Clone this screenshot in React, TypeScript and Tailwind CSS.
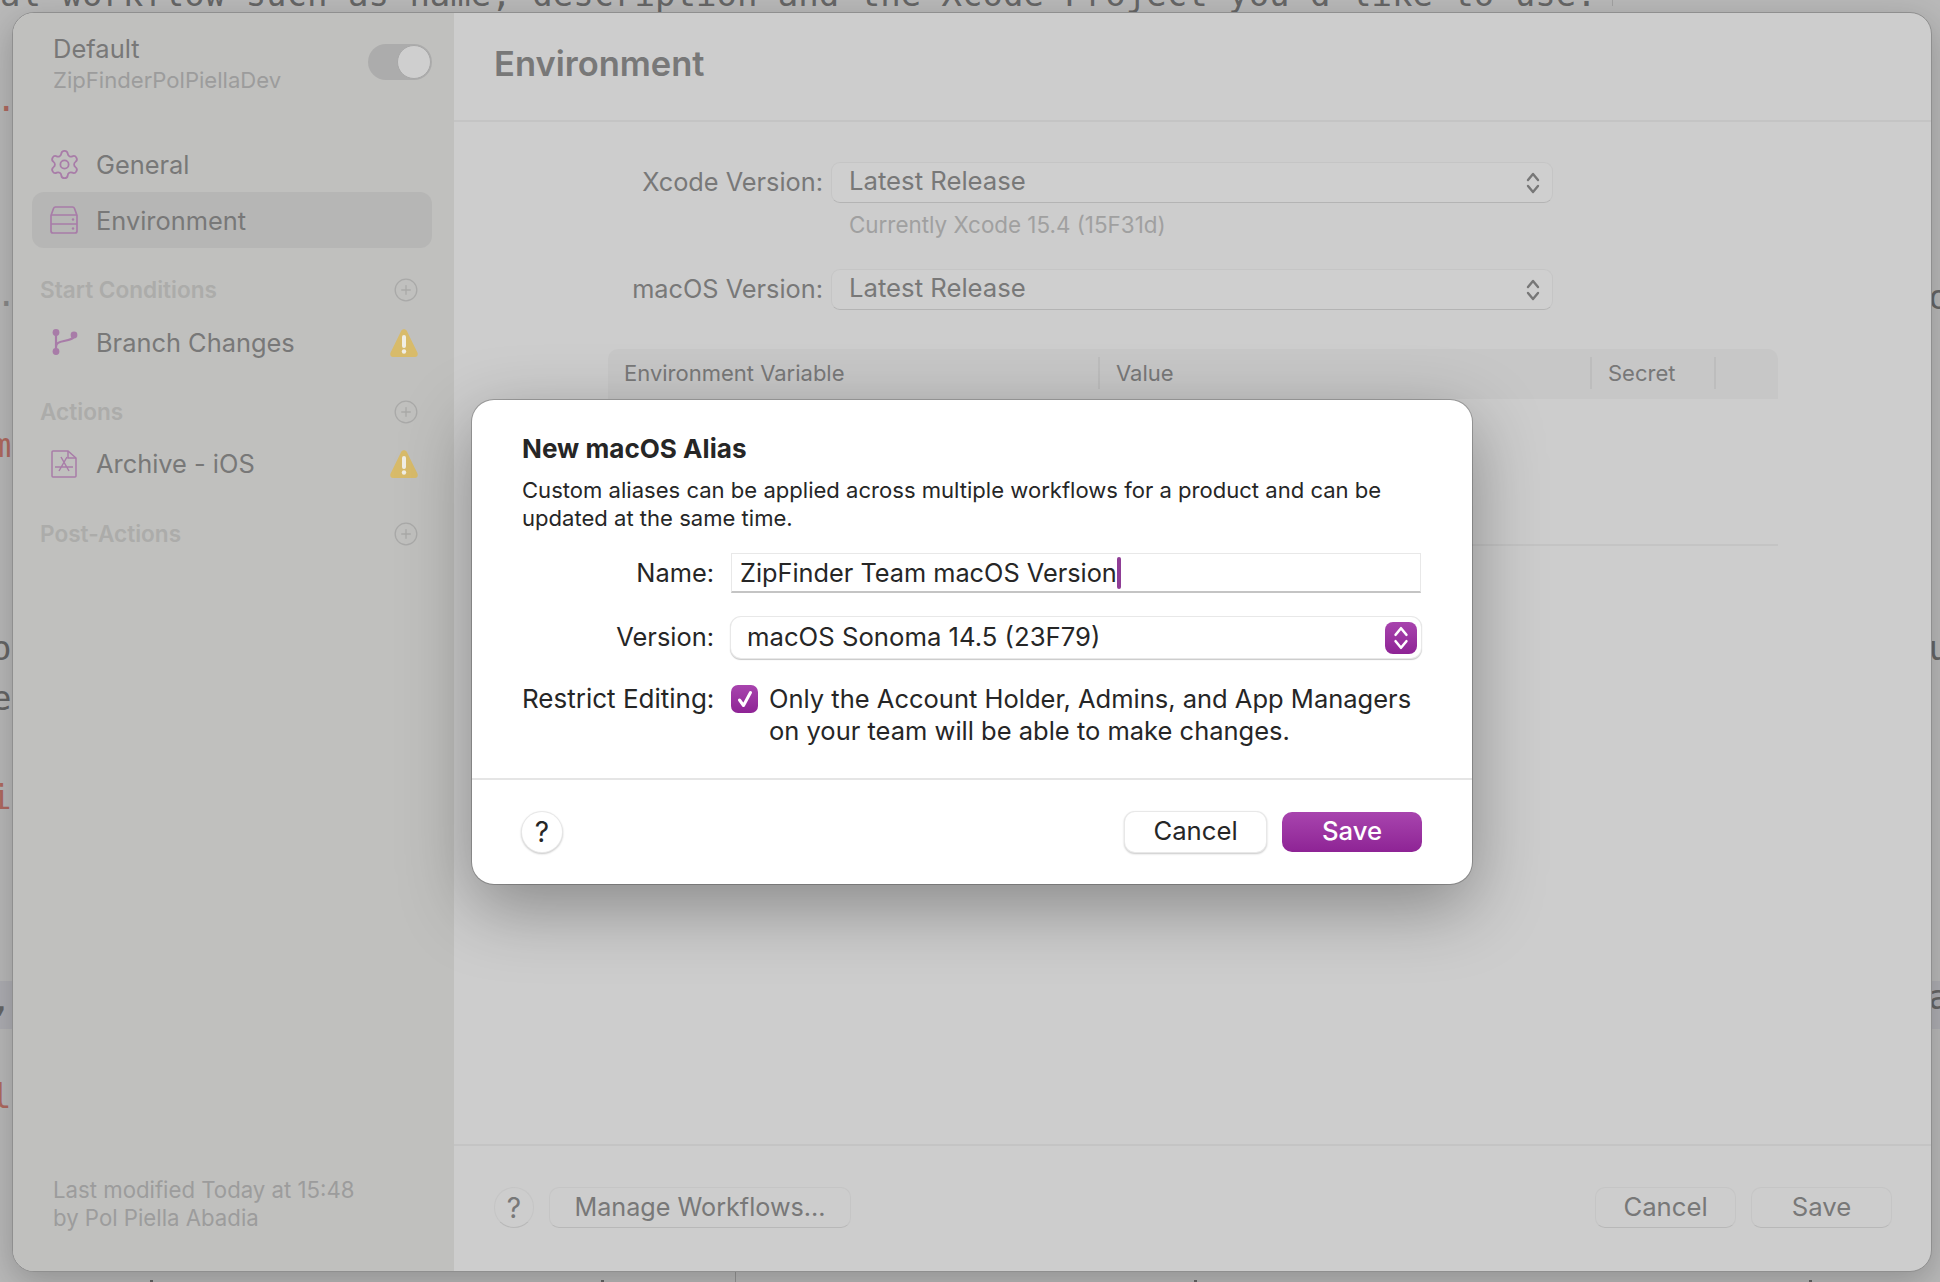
import { CirclePlus, Settings } from 'lucide-react';

function ServerIcon() {
  return (
    <svg viewBox="0 0 28 28" className="w-[28px] h-[28px]" fill="none" stroke="#a87ca8" strokeWidth="1.7">
      <path d="M1 9.5 3.5 2.5A2.5 2.5 0 0 1 5.5 1h17a2.5 2.5 0 0 1 2 1.5L27 9.5V25a2 2 0 0 1-2 2H3a2 2 0 0 1-2-2Z" />
      <path d="M1 9h26M1 18h26" />
      <circle cx="23" cy="13.5" r="1.2" fill="#a87ca8" stroke="none" />
      <circle cx="23" cy="22.5" r="1.2" fill="#a87ca8" stroke="none" />
    </svg>
  );
}

function BranchIcon() {
  return (
    <svg viewBox="0 0 28 28" className="w-[28px] h-[28px]" fill="none" stroke="#a87ca8" strokeWidth="2.2">
      <circle cx="6" cy="3.5" r="3.4" fill="#a87ca8" stroke="none" />
      <circle cx="6" cy="22.5" r="3.4" fill="#a87ca8" stroke="none" />
      <circle cx="24" cy="6" r="3.4" fill="#a87ca8" stroke="none" />
      <path d="M6 4v18M6 18c0-4 3-5 8-6 6-1 10-2 10-6" />
    </svg>
  );
}

function ArchiveIcon() {
  return (
    <svg viewBox="0 0 28 28" className="w-[28px] h-[28px]" fill="none" stroke="#a87ca8" strokeWidth="1.5">
      <path d="M3 1h15l8 7v18a1 1 0 0 1-1 1H3a1 1 0 0 1-1-1V2a1 1 0 0 1 1-1Z" />
      <path d="M18 1v7h8" />
      <path d="M11 7l8 14M17 7 9 21M5 17h18" />
    </svg>
  );
}

function WarningIcon() {
  return (
    <svg viewBox="0 0 28 28" className="w-[28px] h-[28px]">
      <path d="M11 2.200C12.300-.4 15.700-.4 17 2.200L27.400 23.400C28.400 25.400 27.200 28 25 28H3C.8 28-.4 25.400.6 23.400Z" fill="#d8bb6a" />
      <path d="M14 8v9" stroke="#f0eee5" strokeWidth="4" strokeLinecap="round" />
      <circle cx="14" cy="22.500" r="2.200" fill="#f0eee5" />
    </svg>
  );
}

function Chevrons({ color, className }: { color: string; className: string }) {
  return (
    <svg viewBox="0 0 16 24" className={className} fill="none" stroke={color} strokeWidth="2.400" strokeLinecap="round" strokeLinejoin="round">
      <path d="M3 9l5-6 5 6M3 15l5 6 5-6" />
    </svg>
  );
}

function NavRow({ icon, label, active }: { icon: React.ReactNode; label: string; active?: boolean }) {
  return (
    <div className={active ? 'flex items-center h-[56px] ml-[19px] mr-[22px] pl-[18px] rounded-[12px] bg-[#b6b6b5]' : 'flex items-center h-[56px] ml-[19px] mr-[22px] pl-[18px]'}>
      <div className="w-[28px] h-[28px]">{icon}</div>
      <span className="ml-[18px] pt-[2px] text-[25.400px] text-[#787878]">{label}</span>
    </div>
  );
}

function SectionHeader({ label, className }: { label: string; className: string }) {
  return (
    <div className={`flex items-center justify-between h-[40px] ml-[27px] mr-[36px] ${className}`}>
      <span className="text-[22.600px] font-semibold text-[#acacaa]">{label}</span>
      <CirclePlus className="w-[26px] h-[26px] -mr-[1px] text-[#a9a9a8]" strokeWidth={1.200} />
    </div>
  );
}

function IssueRow({ icon, label, className }: { icon: React.ReactNode; label: string; className: string }) {
  return (
    <div className={`flex items-center h-[56px] ml-[37px] mr-[36px] ${className}`}>
      <div className="w-[28px] h-[28px]">{icon}</div>
      <span className="ml-[18px] pt-[1px] text-[25.400px] text-[#787878]">{label}</span>
      <div className="ml-auto">
        <WarningIcon />
      </div>
    </div>
  );
}

function Popup({ label }: { label: string }) {
  return (
    <div className="flex items-center">
      <div className="w-[369px] pl-[1px] pb-[2px] text-right text-[25.300px] text-[#787878]">{label}</div>
      <div className="flex items-center justify-between w-[722px] h-[41px] ml-[8px] pl-[17px] pr-[11px] rounded-[9px] border border-[#c5c5c5] border-b-[#b4b4b4] bg-[#cfcfcf] text-[25.700px] text-[#787878]">
        <span className="pb-[2px]">Latest Release</span>
        <Chevrons color="#777777" className="w-[16px] h-[24px]" />
      </div>
    </div>
  );
}

function GhostButton({ label, className }: { label: string; className: string }) {
  return (
    <div className={`flex items-center justify-center h-[41px] rounded-[10px] border border-[#c5c5c5] border-b-[#b8b8b8] bg-[#cdcdcd] text-[#787878] ${className}`}>
      {label}
    </div>
  );
}

export default function App() {
  return (
    <div className="relative w-[1940px] h-[1282px] overflow-hidden bg-[#b9b9b9] font-['Inter',sans-serif]">
      {/* dimmed editor text behind the window */}
      <div className="absolute inset-0 font-['DejaVu_Sans_Mono',monospace] text-[34px] leading-[48px] text-[#666666]">
        <div className="-mt-[30px] whitespace-pre">{'al workflow such as name, description and the Xcode Project you\'d like to use.'}</div>
        <div className="flex justify-between h-[81px] mt-[63px] text-[#b06a60]"><span className="-ml-[4px] -mt-[6px]">.</span></div>
        <div className="flex justify-between h-[48px] mt-[111px]"><span className="-ml-[4px] -mt-[3px] text-[#8a8a8a]">.</span><span className="-mr-[9px]">o</span></div>
        <div className="flex justify-between h-[48px] mt-[100px] text-[#b06a60]"><span className="-ml-[9px]">m</span></div>
        <div className="flex justify-between h-[48px] mt-[155px]"><span className="-ml-[9px]">o</span><span className="-mr-[9px]">u</span></div>
        <div className="flex justify-between h-[48px] mt-[2px]"><span className="-ml-[9px]">e</span></div>
        <div className="flex justify-between h-[48px] mt-[51px] text-[#b06a60]"><span className="-ml-[9px]">i</span></div>
        <div className="flex justify-between h-[48px] mt-[160px] bg-[#aeaeb3]"><span className="-ml-[9px] -mt-[6px]">,</span><span className="-mr-[9px] -mt-[8px]">a</span></div>
        <div className="flex justify-between h-[48px] mt-[43px] text-[#b06a60]"><span className="-ml-[9px]">l</span></div>
        <span className="absolute left-[1612px] top-0 w-[1px] h-[6px] bg-[#a2a2a2]" />
        <span className="absolute left-[735px] bottom-0 w-[1px] h-[10px] bg-[#959595]" />
        <span className="absolute left-[150px] bottom-0 w-[3px] h-[2px] bg-[#666666]" />
        <span className="absolute left-[601px] bottom-0 w-[3px] h-[2px] bg-[#666666]" />
        <span className="absolute left-[1194px] bottom-0 w-[3px] h-[2px] bg-[#666666]" />
        <span className="absolute left-[1809px] bottom-0 w-[3px] h-[2px] bg-[#666666]" />
      </div>

      {/* window */}
      <div className="relative h-full pt-[12px] pl-[12px] pr-[8px] pb-[10px]">
        <div className="flex h-full overflow-hidden rounded-[22px] border border-[#8f8f8f] bg-[#cdcdcd] shadow-[0_10px_34px_rgba(0,0,0,0.22)]">
          <aside className="flex flex-col w-[441px] shrink-0 pt-[17px] bg-[#c0c0be]">
            <div className="flex items-center justify-between pl-[40px] pr-[22px]">
              <div>
                <div className="h-[36px] pt-[1px] leading-[36px] text-[25.500px] text-[#787878]">Default</div>
                <div className="h-[28px] leading-[28px] text-[22.100px] text-[#9c9c9c]">ZipFinderPolPiellaDev</div>
              </div>
              <div className="flex items-center justify-end w-[64px] h-[36px] p-[1px] rounded-full bg-[#acacac]">
                <div className="w-[34px] h-[34px] rounded-full border border-[#a8a8a8] bg-[#cfcfcf]" />
              </div>
            </div>

            <div className="mt-[42px]">
              <NavRow icon={<Settings className="w-[33px] h-[33px] -m-[2.500px] text-[#a87ca8]" strokeWidth={1.300} />} label="General" />
              <NavRow icon={<ServerIcon />} label="Environment" active />
            </div>

            <SectionHeader label="Start Conditions" className="mt-[22px]" />
            <IssueRow icon={<BranchIcon />} label="Branch Changes" className="mt-[5px]" />
            <SectionHeader label="Actions" className="mt-[21px]" />
            <IssueRow icon={<ArchiveIcon />} label="Archive - iOS" className="mt-[4px]" />
            <SectionHeader label="Post-Actions" className="mt-[22px]" />

            <div className="mt-auto pb-[39px] pl-[40px] text-[22.200px] leading-[28px] text-[#9c9c9c]">
              <div>Last modified Today at 15:48</div>
              <div>by Pol Piella Abadia</div>
            </div>
          </aside>

          <main className="flex flex-col flex-1 min-w-0">
            <header className="flex items-center h-[109px] pl-[40px] pb-[5px] border-b-2 border-[#c4c4c4]">
              <h1 className="text-[34.500px] font-semibold text-[#787878]">Environment</h1>
            </header>

            <div className="flex-1 pt-[40px]">
              <Popup label="Xcode Version:" />
              <div className="h-[66px] pl-[395px] pt-[8px] text-[22.400px] leading-[28px] text-[#a0a0a0]">Currently Xcode 15.4 (15F31d)</div>
              <Popup label="macOS Version:" />

              <div className="w-[1170px] h-[197px] mt-[39px] ml-[154px] border-b-2 border-[#c4c4c4]">
                <div className="flex items-center h-[50px] pb-[2px] rounded-t-[10px] bg-[#c7c7c7] text-[22px] text-[#787878]">
                  <div className="w-[492px] h-[32px] leading-[32px] pl-[16px] border-r-2 border-[#bdbdbd]">Environment Variable</div>
                  <div className="w-[492px] h-[32px] leading-[32px] pl-[16px] border-r-2 border-[#bdbdbd]">Value</div>
                  <div className="w-[124px] h-[32px] leading-[32px] pl-[16px] border-r-2 border-[#bdbdbd]">Secret</div>
                </div>
              </div>
            </div>

            <footer className="flex items-start h-[127px] pl-[40px] pr-[39px] pt-[41px] border-t-2 border-[#c4c4c4]">
              <GhostButton label="?" className="w-[40px] !rounded-full text-[28px]" />
              <GhostButton label="Manage Workflows..." className="w-[302px] ml-[15px] text-[25.200px]" />
              <GhostButton label="Cancel" className="w-[141px] ml-auto text-[25.700px]" />
              <GhostButton label="Save" className="w-[141px] ml-[15px] text-[25.700px]" />
            </footer>
          </main>
        </div>
      </div>

      {/* sheet */}
      <div className="absolute left-[472px] top-[400px] w-[1000px] h-[484px] rounded-[22px] bg-white shadow-[0_0_0_1px_rgba(0,0,0,0.22),0_22px_70px_rgba(0,0,0,0.34)]">
        <div className="px-[50px] pt-[32px]">
          <h2 className="h-[34px] leading-[34px] text-[26.100px] font-bold text-[#262626]">New macOS Alias</h2>
          <p className="mt-[10px] text-[22.070px] leading-[28px] text-[#262626] whitespace-nowrap">
            Custom aliases can be applied across multiple workflows for a product and can be<br />updated at the same time.
          </p>

          <div className="flex items-center mt-[21px]">
            <div className="w-[192px] pt-[1px] text-right text-[25.400px] text-[#262626]">Name:</div>
            <div className="flex items-center w-[690px] h-[40px] ml-[17px] pl-[8px] pt-[1px] border border-[#e8e8e8] border-b-2 border-b-[#c4c4c4] text-[25.300px] text-[#262626]">
              ZipFinder Team macOS Version
              <span className="w-[4px] h-[32px] rounded-full bg-[#8f3e96]" />
            </div>
          </div>

          <div className="flex items-center mt-[24px]">
            <div className="w-[192px] text-right text-[25.400px] text-[#262626]">Version:</div>
            <div className="flex items-center justify-between w-[690px] h-[41px] ml-[17px] pl-[16px] pr-[4px] rounded-[10px] bg-white shadow-[0_0_0_1px_#e8e8e8,0_1px_1px_1px_#c8c8c8] text-[25.700px] text-[#262626]">
              macOS Sonoma 14.5 (23F79)
              <div className="flex items-center justify-center w-[32px] h-[32px] rounded-[8px] bg-gradient-to-b from-[#a844ae] to-[#8e2395]">
                <Chevrons color="#ffffff" className="w-[18px] h-[26px]" />
              </div>
            </div>
          </div>

          <div className="flex items-start mt-[25px]">
            <div className="w-[192px] h-[32px] leading-[32px] text-right text-[26px] text-[#262626] whitespace-nowrap">Restrict Editing:</div>
            <div className="flex items-center justify-center w-[27px] h-[28px] mt-[2px] ml-[17px] rounded-[7px] bg-gradient-to-b from-[#a844ae] to-[#8e2395]">
              <svg viewBox="0 0 20 20" className="w-[20px] h-[20px]" fill="none" stroke="#ffffff" strokeWidth="3" strokeLinecap="round" strokeLinejoin="round">
                <path d="M4.500 11l4 5.500L15.500 3.500" />
              </svg>
            </div>
            <p className="ml-[11px] text-[25.500px] leading-[32px] text-[#262626] whitespace-nowrap">
              Only the Account Holder, Admins, and App Managers<br />on your team will be able to make changes.
            </p>
          </div>
        </div>

        <div className="mt-[31px] h-[2px] bg-[#e5e5e5]" />

        <div className="flex items-center px-[50px] pt-[32px]">
          <div className="flex items-center justify-center w-[40px] h-[40px] rounded-full bg-white shadow-[0_0_0_1px_#e8e8e8,0_1px_2px_1px_#c8c8c8] text-[28px] text-[#262626]">?</div>
          <div className="flex items-center justify-center w-[141px] h-[40px] pb-[2px] ml-auto rounded-[10px] bg-white shadow-[0_0_0_1px_#e8e8e8,0_1px_2px_1px_#c8c8c8] text-[25.700px] text-[#262626]">Cancel</div>
          <div className="flex items-center justify-center w-[140px] h-[40px] pb-[2px] ml-[16px] rounded-[10px] bg-gradient-to-b from-[#a844ae] to-[#8e2395] text-[25.700px] font-medium text-white">Save</div>
        </div>
      </div>
    </div>
  );
}
